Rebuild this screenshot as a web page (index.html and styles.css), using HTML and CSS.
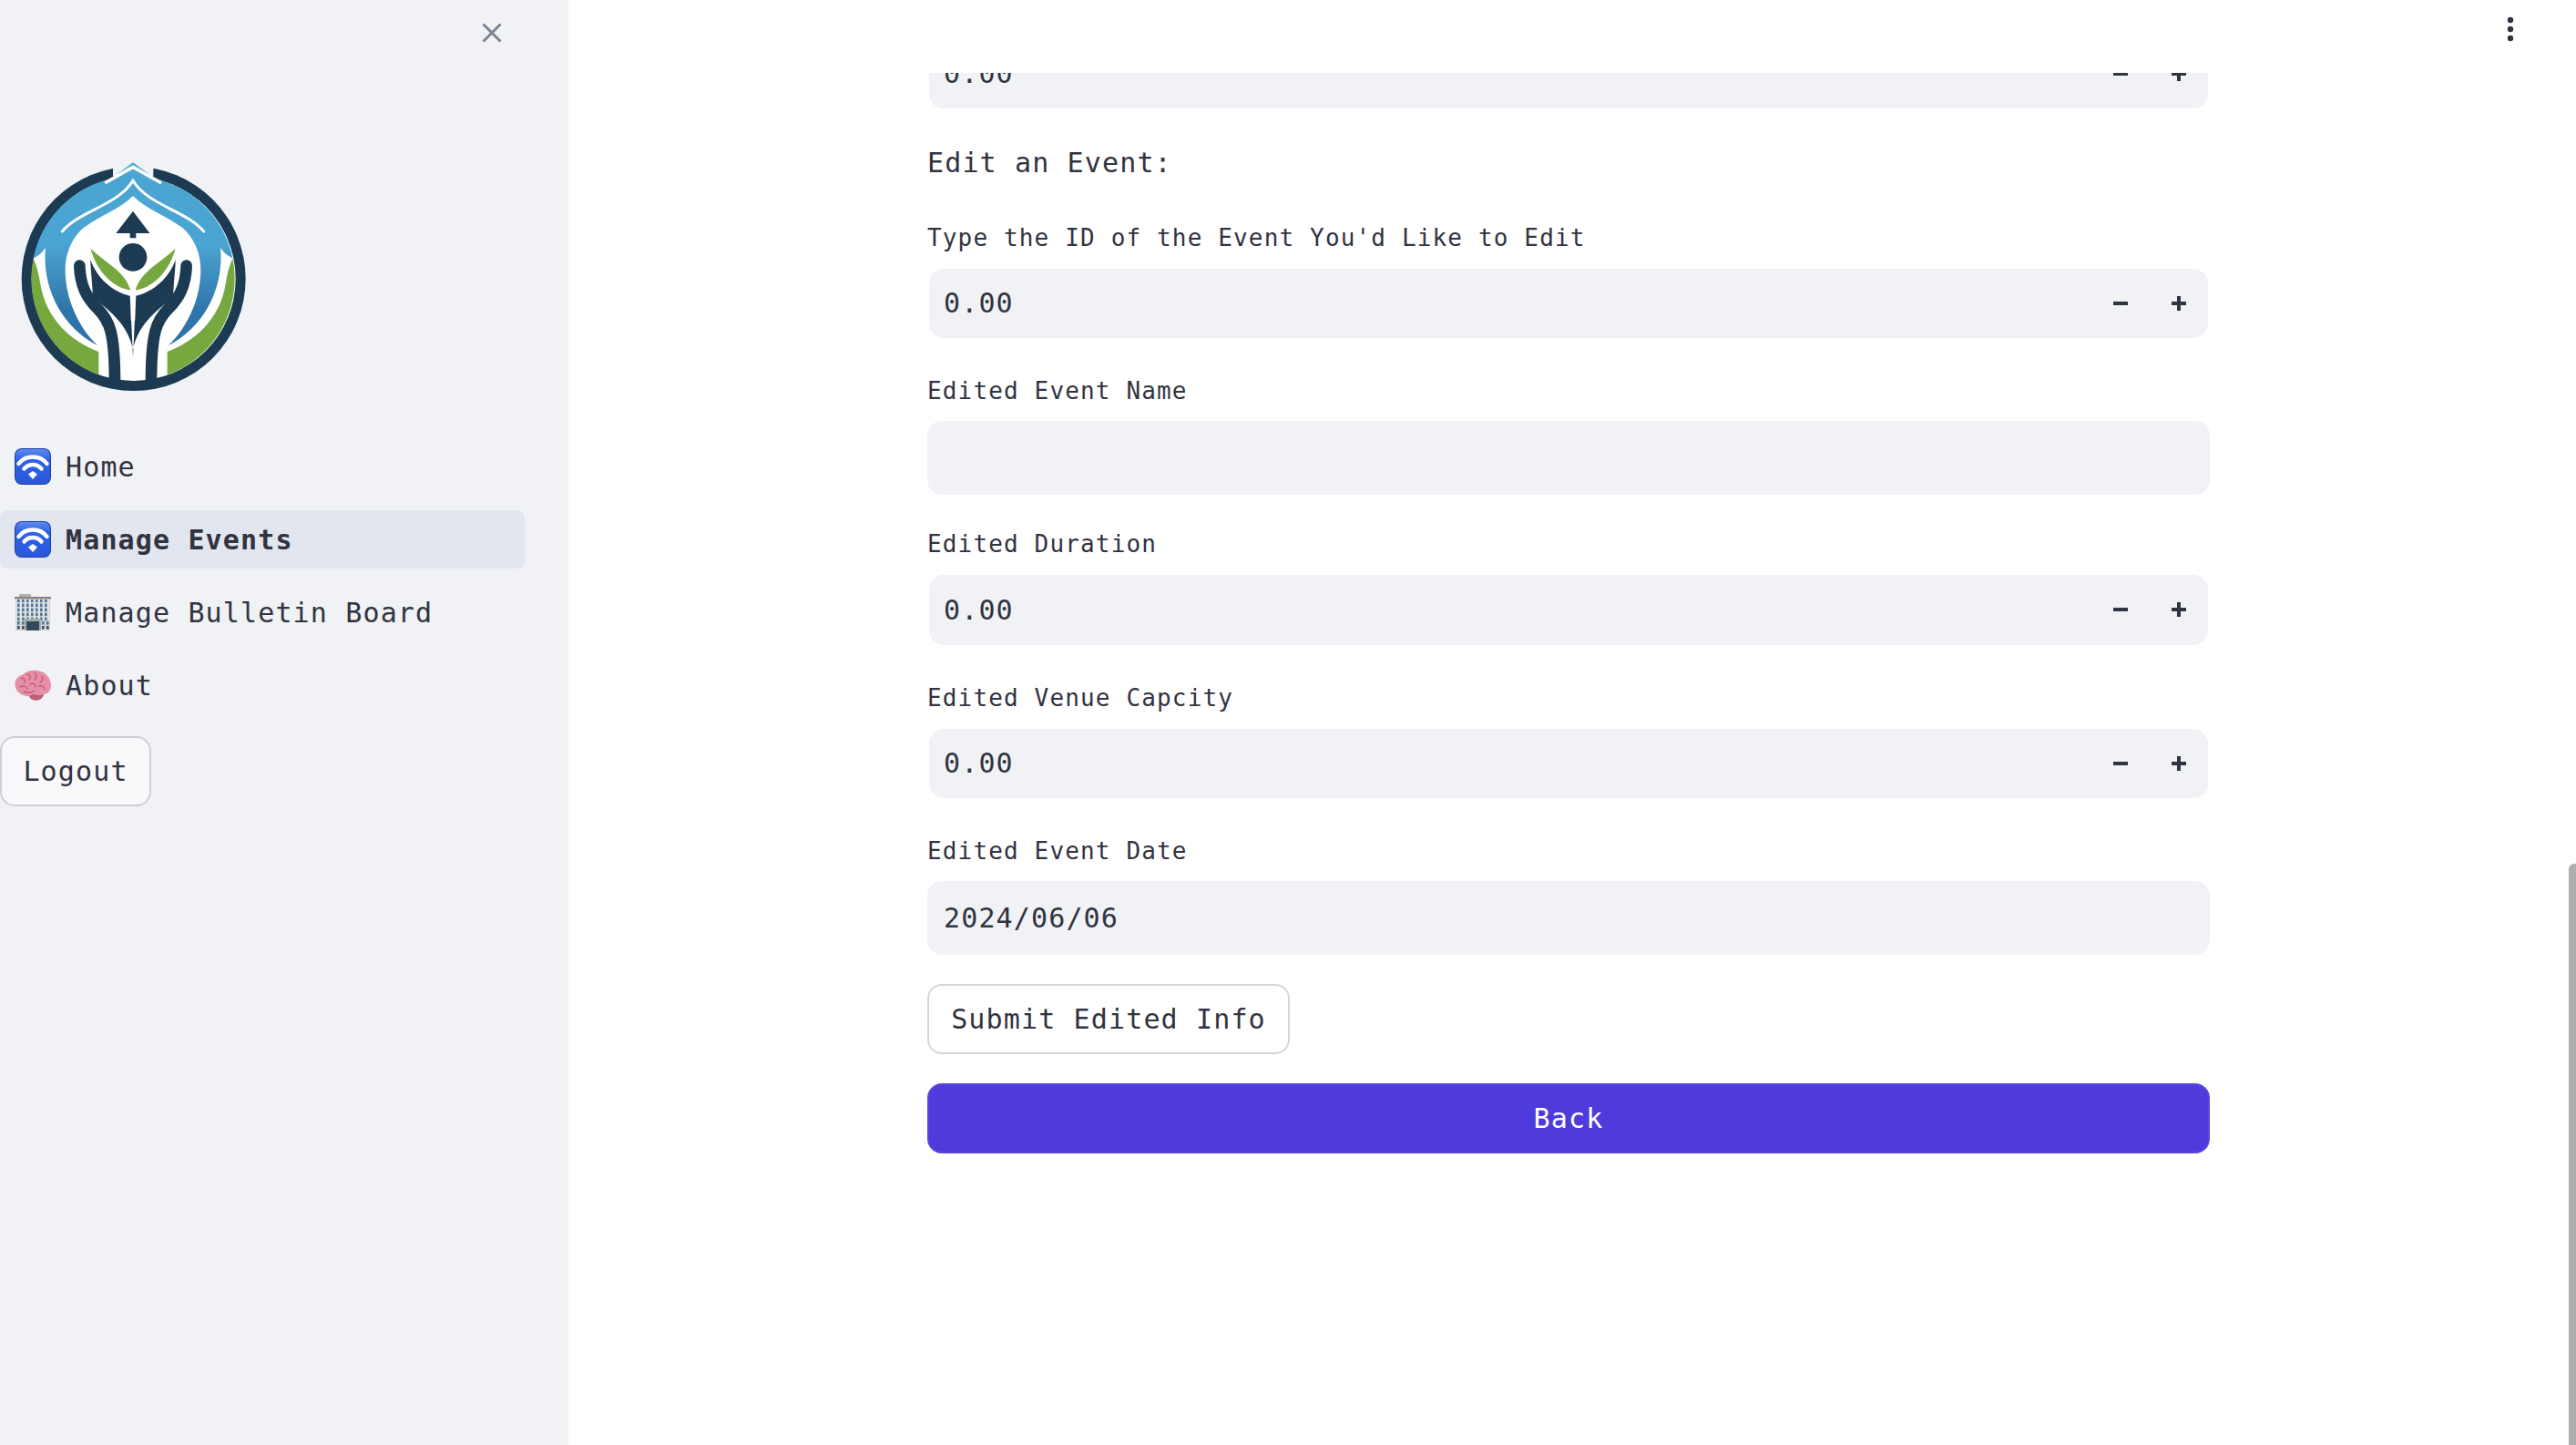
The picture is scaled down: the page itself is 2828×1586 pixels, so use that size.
FILE: index.html
```html
<!DOCTYPE html>
<html>
<head>
	<title>Manage Events</title>
	<link rel="stylesheet" href="styles.css">
</head>
<body>
	<svg class="defs" width="0" height="0">
		<defs>
			<linearGradient id="wifi-bg" x1="0" y1="0" x2="0" y2="1">
				<stop offset="0" stop-color="#5f8af0"/>
				<stop offset="0.3" stop-color="#2f62e6"/>
				<stop offset="1" stop-color="#2a58dc"/>
			</linearGradient>
			<symbol id="wifi" viewBox="0 0 40 40">
				<rect x="0" y="0" width="40" height="40" rx="8" fill="#1c3f9e"/>
				<rect x="1" y="1" width="38" height="38" rx="7" fill="url(#wifi-bg)"/>
				<path d="M4.5 17 C12 7 28 7 35.5 17" fill="none" stroke="#fff" stroke-width="4.4" stroke-linecap="round"/>
				<path d="M10.5 22.5 C15.5 16.5 24.5 16.5 29.5 22.5" fill="none" stroke="#fff" stroke-width="4.4" stroke-linecap="round"/>
				<path d="M15 28.5 L20 25 L25 28.5 L20 34 Z" fill="#fff"/>
			</symbol>
			<symbol id="minus" viewBox="0 0 16 16">
				<rect x="0" y="6" width="16" height="4" fill="#31333f"/>
			</symbol>
			<symbol id="plus" viewBox="0 0 16 16">
				<rect x="0" y="6" width="16" height="4" fill="#31333f"/>
				<rect x="6" y="0" width="4" height="16" fill="#31333f"/>
			</symbol>
			<pattern id="windows" width="5" height="5" patternUnits="userSpaceOnUse" x="2">
				<rect width="5" height="5" fill="#e2e4e2"/>
				<rect x="1" y="0.6" width="2.6" height="3.6" fill="#4f7596"/>
			</pattern>
			<linearGradient id="drop" x1="0" y1="0" x2="0" y2="1">
				<stop offset="0.4" stop-color="#4ba5d2"/>
				<stop offset="0.8" stop-color="#2f74a8"/>
			</linearGradient>
			<g id="logo-half">
				<path d="M438 125 L400 133 A336 336 0 0 0 110 400 C125 392 140 382 150 365 C138 480 190 620 322 688 C250 620 215 520 215 440 C215 385 235 335 275 300 C330 260 400 235 438 195 Z" fill="url(#drop)"/>
				<path d="M110 400 A336 336 0 0 0 325 784 L325 708 C235 675 150 600 132 480 C128 450 118 420 110 400 Z" fill="#77a83f"/>
				<path d="M262 425 C264 490 285 530 320 565 C360 605 378 640 378 810" fill="none" stroke="#1c3a52" stroke-width="38" stroke-linecap="round"/>
				<path d="M298 405 C318 465 372 512 428 524 L432 600 L438 725 L438 700 C425 640 390 590 305 530 C306 490 298 445 298 405 Z" fill="#1c3a52"/>
				<path d="M298 368 C340 410 410 440 430 505 C380 500 320 450 298 368 Z" fill="#77a83f"/>
			</g>
		</defs>
	</svg>

	<aside class="sidebar">
		<div class="sidebar-top">
			<button class="close-btn">
				<svg width="22" height="22" viewBox="0 0 22 22"><path d="M1.5 1.5 L20.5 20.5 M20.5 1.5 L1.5 20.5" stroke="#7f8292" stroke-width="3"/></svg>
			</button>
		</div>
		<svg class="logo" width="320" height="300" viewBox="0 0 960 900">
			<circle cx="440" cy="468" r="369" fill="#1c3a52"/>
			<circle cx="440" cy="468" r="336" fill="#fff"/>
			<use href="#logo-half"/>
			<use href="#logo-half" transform="matrix(-1 0 0 1 876 0)"/>
			<rect x="372" y="80" width="133" height="50" fill="#f0f2f6"/>
			<path d="M438 85 L527 150 L438 175 L350 150 Z" fill="#4ba5d2"/>
			<path d="M350 150 L438 100 L527 150" fill="none" stroke="#fff" stroke-width="11" stroke-linecap="round" stroke-linejoin="round"/>
			<path d="M205 312 C260 245 390 225 438 145 C486 225 616 245 671 312" fill="none" stroke="#fff" stroke-width="9" stroke-linecap="round"/>
			<path d="M438 245 L493 318 L448 318 L448 334 L428 334 L428 318 L382 318 Z" fill="#1c3a52"/>
			<circle cx="438" cy="397" r="46" fill="#1c3a52"/>
			<rect x="431" y="510" width="14" height="95" fill="#fff"/>
		</svg>
		<nav class="nav">
			<a class="nav-item">
				<svg class="nav-icon" width="40" height="40"><use href="#wifi"/></svg>
				<span>Home</span>
			</a>
			<a class="nav-item active">
				<svg class="nav-icon" width="40" height="40"><use href="#wifi"/></svg>
				<span>Manage Events</span>
			</a>
			<a class="nav-item">
				<svg class="nav-icon" width="40" height="40" viewBox="0 0 40 40">
					<rect x="5" y="0" width="13" height="3" fill="#b5b0a6"/>
					<rect x="0" y="3" width="40" height="2.5" fill="#85807a"/>
					<rect x="1" y="5.5" width="38" height="34.5" fill="#d3d6d4"/>
					<rect x="2" y="6" width="36" height="24" fill="url(#windows)"/>
					<rect x="11" y="27" width="18" height="13" fill="#a9aca8"/>
					<rect x="13" y="30" width="14" height="10" fill="#2f4a5c"/>
					<rect x="3" y="30" width="2.6" height="3.6" fill="#4f7596"/>
					<rect x="8" y="30" width="2.6" height="3.6" fill="#4f7596"/>
					<rect x="30" y="30" width="2.6" height="3.6" fill="#4f7596"/>
					<rect x="35" y="30" width="2.6" height="3.6" fill="#4f7596"/>
					<rect x="3" y="35" width="2.6" height="3.6" fill="#3b4f5e"/>
					<rect x="8" y="35" width="2.6" height="3.6" fill="#3b4f5e"/>
					<rect x="30" y="35" width="2.6" height="3.6" fill="#3b4f5e"/>
					<rect x="35" y="35" width="2.6" height="3.6" fill="#3b4f5e"/>
				</svg>
				<span>Manage Bulletin Board</span>
			</a>
			<a class="nav-item">
				<svg class="nav-icon" width="40" height="40" viewBox="0 0 40 40">
					<path d="M0.5 21 C-0.5 14 4 10 9 8.5 C13 4 21 2.5 27 4.5 C34 5.5 39.5 12 40 20 C40 26 37 29.5 32 30 C31 34 28 36.5 24 36.5 C20 37 17 35 16 32 C9 32.5 2 28 0.5 21 Z" fill="#e88fa8"/>
					<path d="M16 32 C19 30 22 30 24 31 C27 31.5 30 30.5 32 30 C31 34 28 36.5 24 36.5 C20 37 17 35 16 32 Z" fill="#bd5f77"/>
					<path d="M7 13 C10 11 12 14 11 17 M14 8 C17 8 18 11 16 14 M22 6.5 C25 9 24 12 22 14 M30 10 C32 13 30 16 28 17 M6 22 C9 20 13 21 14 24 M17 19 C20 17 23 19 23 22 M27 21 C30 20 33 22 33 25 M10 27 C14 29 19 28 22 26" fill="none" stroke="#bd5f77" stroke-width="1.4" stroke-linecap="round"/>
				</svg>
				<span>About</span>
			</a>
		</nav>
		<button class="btn logout">Logout</button>
	</aside>

	<main class="main">
		<header class="topbar">
			<svg width="6" height="26" viewBox="0 0 6 26">
				<circle cx="3" cy="3" r="3.2" fill="#31333f"/>
				<circle cx="3" cy="13" r="3.2" fill="#31333f"/>
				<circle cx="3" cy="23" r="3.2" fill="#31333f"/>
			</svg>
		</header>
		<div class="scroller">
			<div class="content">
				<div class="num-input cut-off">
					<input type="text" value="0.00" readonly>
					<svg width="16" height="16"><use href="#minus"/></svg>
					<svg width="16" height="16"><use href="#plus"/></svg>
				</div>

				<h3 class="section-title">Edit an Event:</h3>

				<div class="field">
					<label>Type the ID of the Event You'd Like to Edit</label>
					<div class="num-input">
						<input type="text" value="0.00" readonly>
						<svg width="16" height="16"><use href="#minus"/></svg>
						<svg width="16" height="16"><use href="#plus"/></svg>
					</div>
				</div>
				<div class="field">
					<label>Edited Event Name</label>
					<input class="text-input" type="text" value="" readonly>
				</div>
				<div class="field">
					<label>Edited Duration</label>
					<div class="num-input">
						<input type="text" value="0.00" readonly>
						<svg width="16" height="16"><use href="#minus"/></svg>
						<svg width="16" height="16"><use href="#plus"/></svg>
					</div>
				</div>
				<div class="field">
					<label>Edited Venue Capcity</label>
					<div class="num-input">
						<input type="text" value="0.00" readonly>
						<svg width="16" height="16"><use href="#minus"/></svg>
						<svg width="16" height="16"><use href="#plus"/></svg>
					</div>
				</div>
				<div class="field">
					<label>Edited Event Date</label>
					<input class="text-input" type="text" value="2024/06/06" readonly>
				</div>

				<button class="btn submit">Submit Edited Info</button>
				<button class="btn primary">Back</button>
			</div>
		</div>
	</main>
	<div class="scrollbar"><div class="thumb"></div></div>
</body>
</html>
```

FILE: styles.css
```css
*{
	margin: 0;
	padding: 0;
	box-sizing: border-box;
}
html, body{
	height: 100%;
	overflow: hidden;
}
body{
	display: flex;
	font-family: "DejaVu Sans Mono", monospace;
	color: #31333f;
	background-color: #fff;
}
.defs{
	position: absolute;
}

/* sidebar */
.sidebar{
	width: 624px;
	flex-shrink: 0;
	background-color: #f0f2f6;
}
.sidebar-top{
	height: 150px;
	display: flex;
	justify-content: flex-end;
	align-items: flex-start;
	padding: 25px 73px 0 0;
}
.close-btn{
	width: 22px;
	height: 22px;
	border: none;
	background: none;
	display: block;
}
.logo{
	display: block;
}
.nav{
	margin-top: 30px;
	width: 576px;
	display: flex;
	flex-direction: column;
	gap: 16px;
}
.nav-item{
	height: 64px;
	display: flex;
	align-items: center;
	gap: 16px;
	padding-left: 16px;
	font-size: 30px;
	letter-spacing: 1.14px;
	border-radius: 8px;
}
.nav-item.active{
	background-color: #e2e6ee;
	font-weight: 700;
}
.nav-icon{
	flex-shrink: 0;
}

/* buttons */
.btn{
	display: block;
	height: 77px;
	font-family: inherit;
	font-size: 30px;
	letter-spacing: 1.14px;
	color: #31333f;
	background-color: #fff;
	border: 2px solid #d5d6d9;
	border-radius: 16px;
}
.logout{
	margin-top: 24px;
	width: 166px;
	background-color: #f9f9fb;
	border-color: #cfcfd4;
}
.submit{
	margin-top: 36px;
	width: 398px;
}
.primary{
	margin-top: 32px;
	width: 100%;
	color: #fff;
	background-color: #4f3bdb;
	border-color: #5a48de;
}

/* main column */
.main{
	flex: 1;
	display: flex;
	flex-direction: column;
	min-width: 0;
}
.topbar{
	height: 80px;
	flex-shrink: 0;
	display: flex;
	justify-content: flex-end;
	padding: 19px 61px 0 0;
	background-color: #fff;
}
.topbar svg{
	display: block;
	overflow: visible;
}
.scroller{
	flex: 1;
	overflow: hidden;
}
.content{
	width: 1408px;
	margin: 0 auto;
}

/* fields */
.section-title{
	margin: 33.5px 0 34px;
	font-size: 30px;
	letter-spacing: 1.14px;
	line-height: 52px;
	font-weight: 400;
}
.field{
	margin-bottom: 36px;
}
.field:nth-last-of-type(1){
	margin-bottom: 0;
}
.field label{
	display: block;
	height: 44px;
	margin-bottom: 12px;
	font-size: 26px;
	letter-spacing: 1.15px;
	line-height: 45px;
}
.num-input{
	height: 76.5px;
	margin: 0 2px;
	display: flex;
	align-items: center;
	gap: 48px;
	padding-right: 24px;
	background-color: #f0f2f6;
	border-radius: 16px;
}
.num-input.cut-off{
	margin-top: -37.5px;
	border-radius: 0 0 16px 16px;
}
.num-input input{
	flex: 1;
	min-width: 0;
	padding-left: 16px;
}
.num-input input, .text-input{
	border: none;
	outline: none;
	background: none;
	font-family: inherit;
	font-size: 30px;
	letter-spacing: 1.14px;
	color: #31333f;
}
.text-input{
	display: block;
	width: 100%;
	height: 81px;
	margin: -1.5px 0 -3.5px;
	padding-left: 18px;
	background-color: #f0f2f6;
	border-radius: 16px;
}

/* page scrollbar */
.scrollbar{
	width: 8px;
	flex-shrink: 0;
	padding-top: 948px;
}
.thumb{
	height: 100%;
	background-color: #aeaeb2;
	border-radius: 6px 0 0 0;
}
```
